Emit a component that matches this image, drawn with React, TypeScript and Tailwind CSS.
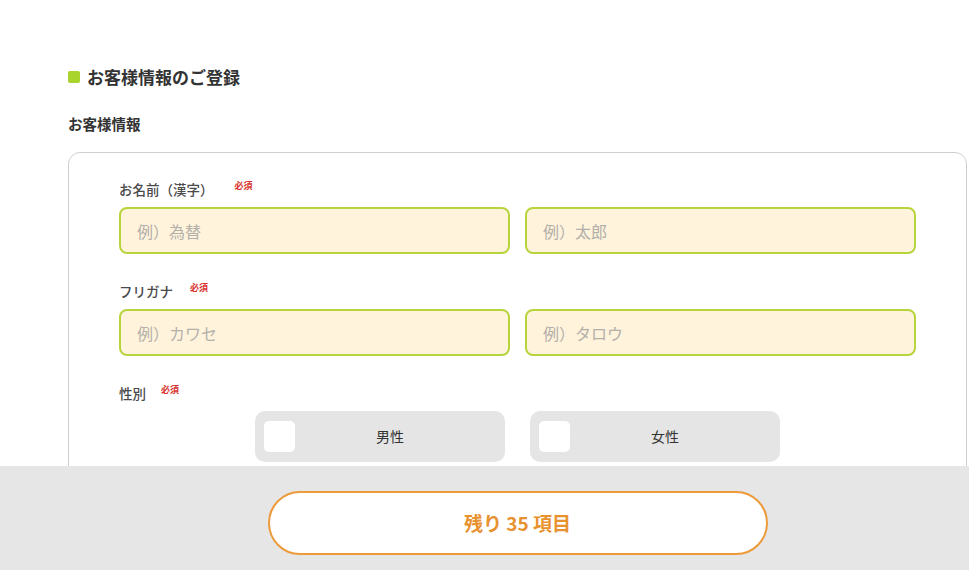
import React from "react";

const font = { fontFamily: '"Noto Sans CJK JP", "Noto Sans", sans-serif' };

function Required({ className = "" }: { className?: string }) {
  return (
    <span className={`text-[9px] font-bold text-[#d8312c] leading-none ${className}`}>必須</span>
  );
}

function Field({ placeholder }: { placeholder: string }) {
  return (
    <input
      className="h-[47px] w-full rounded-[8px] border-2 border-[#b8d43c] bg-[#fff3dc] px-[16px] text-[16px] text-[#333] outline-none placeholder:text-[#b3b0aa]"
      placeholder={placeholder}
    />
  );
}

function Choice({ label }: { label: string }) {
  return (
    <div className="flex h-[51px] w-[250px] items-center rounded-[10px] bg-[#e5e5e5] pl-[9px]">
      <div className="h-[31px] w-[31px] rounded-[5px] bg-white" />
      <div className="flex-1 pr-[20px] text-center text-[14px] text-[#333]">{label}</div>
    </div>
  );
}

export default function App() {
  return (
    <div className="min-h-[700px] bg-white" style={font}>
      <div className="pl-[68px] pr-[2px] pt-[66px]">
        <div className="flex items-center gap-[7px]">
          <div className="h-[12px] w-[12px] rounded-[2px] bg-[#a9d42c]" />
          <h2 className="text-[17px] font-bold leading-[22px] text-[#333]">お客様情報のご登録</h2>
        </div>
        <h3 className="mt-[26px] text-[14.5px] font-bold leading-[20px] text-[#333]">お客様情報</h3>
        <div className="mt-[18px] rounded-[12px] border border-[#cfcfcf] px-[50px] pb-[40px] pt-[26px]">
          <div className="flex items-start">
            <span className="text-[13.5px] font-medium leading-[20px] text-[#4a4a4a]">お名前（漢字）</span>
            <Required className="ml-[21px] mt-[2px]" />
          </div>
          <div className="mt-[8px] flex gap-[15px]">
            <Field placeholder="例）為替" />
            <Field placeholder="例）太郎" />
          </div>
          <div className="mt-[27px] flex items-start">
            <span className="text-[13.5px] font-medium leading-[20px] text-[#4a4a4a]">フリガナ</span>
            <Required className="ml-[17px] mt-[2px]" />
          </div>
          <div className="mt-[8px] flex gap-[15px]">
            <Field placeholder="例）カワセ" />
            <Field placeholder="例）タロウ" />
          </div>
          <div className="mt-[27px] flex items-start">
            <span className="text-[13.5px] font-medium leading-[20px] text-[#4a4a4a]">性別</span>
            <Required className="ml-[15px] mt-[2px]" />
          </div>
          <div className="mt-[8px] flex justify-center gap-[25px]">
            <Choice label="男性" />
            <Choice label="女性" />
          </div>
          <div className="h-[200px]" />
        </div>
      </div>
      <div className="fixed bottom-0 left-0 right-0 h-[104px] bg-[#e6e6e6] pl-[68px] pr-[2px] pt-[25px]">
        <div className="flex justify-center">
          <button className="h-[64px] w-[500px] rounded-full border-2 border-[#ec9a3a] bg-white text-[19px] font-bold text-[#e8912f]">
            残り 35 項目
          </button>
        </div>
      </div>
    </div>
  );
}
